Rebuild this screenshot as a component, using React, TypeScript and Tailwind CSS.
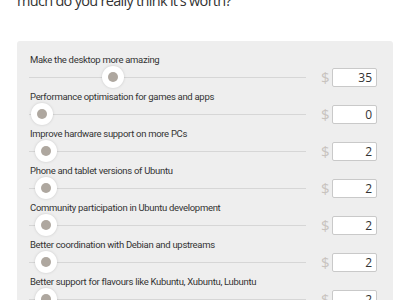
import React from "react";

const items = [
  { label: "Make the desktop more amazing", value: 35 },
  { label: "Performance optimisation for games and apps", value: 0 },
  { label: "Improve hardware support on more PCs", value: 2 },
  { label: "Phone and tablet versions of Ubuntu", value: 2 },
  { label: "Community participation in Ubuntu development", value: 2 },
  { label: "Better coordination with Debian and upstreams", value: 2 },
  { label: "Better support for flavours like Kubuntu, Xubuntu, Lubuntu", value: 2 },
];

function SliderRow({ label, value }: { label: string; value: number }) {
  return (
    <div className="flex flex-col">
      <div className="text-[9.5px] leading-[14px] tracking-[-0.3px] text-[#333] pl-[1px] font-['Roboto',sans-serif]">
        {label}
      </div>
      <div className="flex items-center h-[20px]">
        <div className="relative flex-1 h-[20px] flex items-center">
          <div className="w-full h-[1px] bg-[#d6d6d6]" />
          <div
            className="absolute top-[-1px] w-[22px] h-[22px] rounded-full bg-white shadow-[0_0_3px_rgba(0,0,0,0.15)] flex items-center justify-center"
            style={{ left: 2 + value * 2.03 }}
          >
            <div className="w-[10px] h-[10px] rounded-full bg-[#aea79f]" />
          </div>
        </div>
        <span className="ml-[15px] text-[15px] text-[#c8c3be] leading-none w-[6px]">$</span>
        <div className="ml-[5px] w-[45px] h-[19px] bg-white border border-[#c9c9c9] rounded-[2px] text-right pr-[4px] text-[12px] leading-[17px] text-[#333]">
          {value}
        </div>
      </div>
    </div>
  );
}

export default function App() {
  return (
    <div
      className="w-[400px] h-[300px] overflow-hidden bg-white"
      style={{ fontFamily: '"Open Sans", "Liberation Sans", sans-serif' }}
    >
      <div className="pl-[17px] mt-[-9px] text-[14.5px] leading-[20px] tracking-[-0.7px] text-[#333]">
        much do you really think it's worth?
      </div>
      <div className="mx-[17px] mt-[30px] w-[376px] bg-[#eeeeee] rounded-[3px] pt-[12px] pl-[12px] pr-[16px] pb-4 flex flex-col gap-[3px]">
        {items.map((item) => (
          <SliderRow key={item.label} label={item.label} value={item.value} />
        ))}
      </div>
    </div>
  );
}
